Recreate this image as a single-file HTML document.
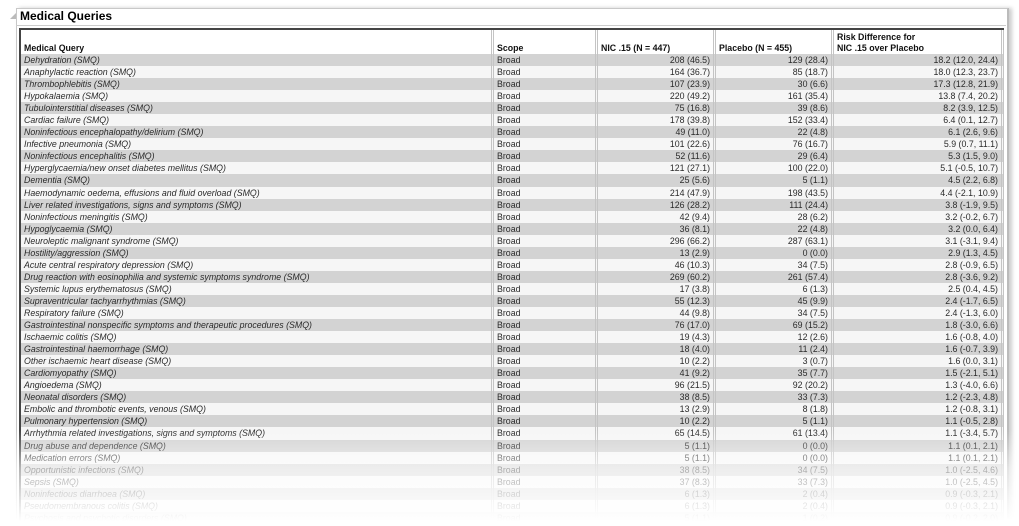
<!DOCTYPE html>
<html style="overflow:hidden;width:1019px;height:526px"><head><meta charset="utf-8"><style>
html,body{overflow:hidden}
body{margin:0;width:1019px;height:526px;background:#fff;font-family:"Liberation Sans",sans-serif;position:relative}
.outer{position:absolute;left:16px;top:8px;width:990px;height:510px;border:1px solid #c8c8c8;border-right:2px solid #bbb;border-bottom:none;box-shadow:3px 0 4px #ccc}
.title{position:absolute;left:20px;top:9px;font-size:12px;font-weight:bold;color:#000}
.tri{position:absolute;left:10px;top:13px;width:0;height:0;border-left:6px solid transparent;border-bottom:6px solid #bbb}
.tline{position:absolute;left:16px;top:25px;width:990px;border-top:1px solid #ccc}
.wrap{position:absolute;left:0;top:0;width:1019px;height:526px;overflow:hidden}
table{position:absolute;left:19px;top:28px;width:985px;table-layout:fixed;border-collapse:separate;border-spacing:0;font-size:8.8px;color:#2a2a2a;border-top:2px solid #444;border-left:2px solid #444}
td{height:12.05px;padding:0 3px;line-height:12px;white-space:nowrap;overflow:hidden;border-right:3px double #c4c4c4}
tr:nth-child(even) td{background:#d3d3d3}
tr:nth-child(odd) td{background:#f6f6f6}
tr.h td{background:#fff;font-weight:bold;color:#111;height:24px;vertical-align:bottom;line-height:11px}
td.n{font-style:italic}
td.a,td.b,td.r{text-align:right}
.fade{position:absolute;left:0;top:430px;width:1019px;height:96px;background:linear-gradient(rgba(255,255,255,0),rgba(255,255,255,0.6) 40%,rgba(255,255,255,1) 95%)}
</style></head><body>
<div class="wrap">
<div class="outer"></div>
<div class="tri"></div>
<div class="title">Medical Queries</div>
<div class="tline"></div>
<table>
<colgroup><col style="width:473px"><col style="width:104px"><col style="width:118px"><col style="width:118px"><col style="width:170px"></colgroup>
<tr class="h"><td class="n" style="font-style:normal">Medical Query</td><td class="s">Scope</td><td class="a" style="text-align:left">NIC .15 (N = 447)</td><td class="b" style="text-align:left">Placebo (N = 455)</td><td class="r" style="text-align:left">Risk Difference for<br>NIC .15 over Placebo</td></tr>
<tr><td class="n">Dehydration (SMQ)</td><td class="s">Broad</td><td class="a">208 (46.5)</td><td class="b">129 (28.4)</td><td class="r">18.2 (12.0, 24.4)</td></tr>
<tr><td class="n">Anaphylactic reaction (SMQ)</td><td class="s">Broad</td><td class="a">164 (36.7)</td><td class="b">85 (18.7)</td><td class="r">18.0 (12.3, 23.7)</td></tr>
<tr><td class="n">Thrombophlebitis (SMQ)</td><td class="s">Broad</td><td class="a">107 (23.9)</td><td class="b">30 (6.6)</td><td class="r">17.3 (12.8, 21.9)</td></tr>
<tr><td class="n">Hypokalaemia (SMQ)</td><td class="s">Broad</td><td class="a">220 (49.2)</td><td class="b">161 (35.4)</td><td class="r">13.8 (7.4, 20.2)</td></tr>
<tr><td class="n">Tubulointerstitial diseases (SMQ)</td><td class="s">Broad</td><td class="a">75 (16.8)</td><td class="b">39 (8.6)</td><td class="r">8.2 (3.9, 12.5)</td></tr>
<tr><td class="n">Cardiac failure (SMQ)</td><td class="s">Broad</td><td class="a">178 (39.8)</td><td class="b">152 (33.4)</td><td class="r">6.4 (0.1, 12.7)</td></tr>
<tr><td class="n">Noninfectious encephalopathy/delirium (SMQ)</td><td class="s">Broad</td><td class="a">49 (11.0)</td><td class="b">22 (4.8)</td><td class="r">6.1 (2.6, 9.6)</td></tr>
<tr><td class="n">Infective pneumonia (SMQ)</td><td class="s">Broad</td><td class="a">101 (22.6)</td><td class="b">76 (16.7)</td><td class="r">5.9 (0.7, 11.1)</td></tr>
<tr><td class="n">Noninfectious encephalitis (SMQ)</td><td class="s">Broad</td><td class="a">52 (11.6)</td><td class="b">29 (6.4)</td><td class="r">5.3 (1.5, 9.0)</td></tr>
<tr><td class="n">Hyperglycaemia/new onset diabetes mellitus (SMQ)</td><td class="s">Broad</td><td class="a">121 (27.1)</td><td class="b">100 (22.0)</td><td class="r">5.1 (-0.5, 10.7)</td></tr>
<tr><td class="n">Dementia (SMQ)</td><td class="s">Broad</td><td class="a">25 (5.6)</td><td class="b">5 (1.1)</td><td class="r">4.5 (2.2, 6.8)</td></tr>
<tr><td class="n">Haemodynamic oedema, effusions and fluid overload (SMQ)</td><td class="s">Broad</td><td class="a">214 (47.9)</td><td class="b">198 (43.5)</td><td class="r">4.4 (-2.1, 10.9)</td></tr>
<tr><td class="n">Liver related investigations, signs and symptoms (SMQ)</td><td class="s">Broad</td><td class="a">126 (28.2)</td><td class="b">111 (24.4)</td><td class="r">3.8 (-1.9, 9.5)</td></tr>
<tr><td class="n">Noninfectious meningitis (SMQ)</td><td class="s">Broad</td><td class="a">42 (9.4)</td><td class="b">28 (6.2)</td><td class="r">3.2 (-0.2, 6.7)</td></tr>
<tr><td class="n">Hypoglycaemia (SMQ)</td><td class="s">Broad</td><td class="a">36 (8.1)</td><td class="b">22 (4.8)</td><td class="r">3.2 (0.0, 6.4)</td></tr>
<tr><td class="n">Neuroleptic malignant syndrome (SMQ)</td><td class="s">Broad</td><td class="a">296 (66.2)</td><td class="b">287 (63.1)</td><td class="r">3.1 (-3.1, 9.4)</td></tr>
<tr><td class="n">Hostility/aggression (SMQ)</td><td class="s">Broad</td><td class="a">13 (2.9)</td><td class="b">0 (0.0)</td><td class="r">2.9 (1.3, 4.5)</td></tr>
<tr><td class="n">Acute central respiratory depression (SMQ)</td><td class="s">Broad</td><td class="a">46 (10.3)</td><td class="b">34 (7.5)</td><td class="r">2.8 (-0.9, 6.5)</td></tr>
<tr><td class="n">Drug reaction with eosinophilia and systemic symptoms syndrome (SMQ)</td><td class="s">Broad</td><td class="a">269 (60.2)</td><td class="b">261 (57.4)</td><td class="r">2.8 (-3.6, 9.2)</td></tr>
<tr><td class="n">Systemic lupus erythematosus (SMQ)</td><td class="s">Broad</td><td class="a">17 (3.8)</td><td class="b">6 (1.3)</td><td class="r">2.5 (0.4, 4.5)</td></tr>
<tr><td class="n">Supraventricular tachyarrhythmias (SMQ)</td><td class="s">Broad</td><td class="a">55 (12.3)</td><td class="b">45 (9.9)</td><td class="r">2.4 (-1.7, 6.5)</td></tr>
<tr><td class="n">Respiratory failure (SMQ)</td><td class="s">Broad</td><td class="a">44 (9.8)</td><td class="b">34 (7.5)</td><td class="r">2.4 (-1.3, 6.0)</td></tr>
<tr><td class="n">Gastrointestinal nonspecific symptoms and therapeutic procedures (SMQ)</td><td class="s">Broad</td><td class="a">76 (17.0)</td><td class="b">69 (15.2)</td><td class="r">1.8 (-3.0, 6.6)</td></tr>
<tr><td class="n">Ischaemic colitis (SMQ)</td><td class="s">Broad</td><td class="a">19 (4.3)</td><td class="b">12 (2.6)</td><td class="r">1.6 (-0.8, 4.0)</td></tr>
<tr><td class="n">Gastrointestinal haemorrhage (SMQ)</td><td class="s">Broad</td><td class="a">18 (4.0)</td><td class="b">11 (2.4)</td><td class="r">1.6 (-0.7, 3.9)</td></tr>
<tr><td class="n">Other ischaemic heart disease (SMQ)</td><td class="s">Broad</td><td class="a">10 (2.2)</td><td class="b">3 (0.7)</td><td class="r">1.6 (0.0, 3.1)</td></tr>
<tr><td class="n">Cardiomyopathy (SMQ)</td><td class="s">Broad</td><td class="a">41 (9.2)</td><td class="b">35 (7.7)</td><td class="r">1.5 (-2.1, 5.1)</td></tr>
<tr><td class="n">Angioedema (SMQ)</td><td class="s">Broad</td><td class="a">96 (21.5)</td><td class="b">92 (20.2)</td><td class="r">1.3 (-4.0, 6.6)</td></tr>
<tr><td class="n">Neonatal disorders (SMQ)</td><td class="s">Broad</td><td class="a">38 (8.5)</td><td class="b">33 (7.3)</td><td class="r">1.2 (-2.3, 4.8)</td></tr>
<tr><td class="n">Embolic and thrombotic events, venous (SMQ)</td><td class="s">Broad</td><td class="a">13 (2.9)</td><td class="b">8 (1.8)</td><td class="r">1.2 (-0.8, 3.1)</td></tr>
<tr><td class="n">Pulmonary hypertension (SMQ)</td><td class="s">Broad</td><td class="a">10 (2.2)</td><td class="b">5 (1.1)</td><td class="r">1.1 (-0.5, 2.8)</td></tr>
<tr><td class="n">Arrhythmia related investigations, signs and symptoms (SMQ)</td><td class="s">Broad</td><td class="a">65 (14.5)</td><td class="b">61 (13.4)</td><td class="r">1.1 (-3.4, 5.7)</td></tr>
<tr><td class="n">Drug abuse and dependence (SMQ)</td><td class="s">Broad</td><td class="a">5 (1.1)</td><td class="b">0 (0.0)</td><td class="r">1.1 (0.1, 2.1)</td></tr>
<tr><td class="n">Medication errors (SMQ)</td><td class="s">Broad</td><td class="a">5 (1.1)</td><td class="b">0 (0.0)</td><td class="r">1.1 (0.1, 2.1)</td></tr>
<tr><td class="n">Opportunistic infections (SMQ)</td><td class="s">Broad</td><td class="a">38 (8.5)</td><td class="b">34 (7.5)</td><td class="r">1.0 (-2.5, 4.6)</td></tr>
<tr><td class="n">Sepsis (SMQ)</td><td class="s">Broad</td><td class="a">37 (8.3)</td><td class="b">33 (7.3)</td><td class="r">1.0 (-2.5, 4.5)</td></tr>
<tr><td class="n">Noninfectious diarrhoea (SMQ)</td><td class="s">Broad</td><td class="a">6 (1.3)</td><td class="b">2 (0.4)</td><td class="r">0.9 (-0.3, 2.1)</td></tr>
<tr><td class="n">Pseudomembranous colitis (SMQ)</td><td class="s">Broad</td><td class="a">6 (1.3)</td><td class="b">2 (0.4)</td><td class="r">0.9 (-0.3, 2.1)</td></tr>
<tr><td class="n">Psychosis and psychotic disorders (SMQ)</td><td class="s">Broad</td><td class="a">5 (1.1)</td><td class="b">1 (0.2)</td><td class="r">0.9 (-0.2, 2.0)</td></tr>
</table>
<div class="fade"></div>
</div>
</body></html>
